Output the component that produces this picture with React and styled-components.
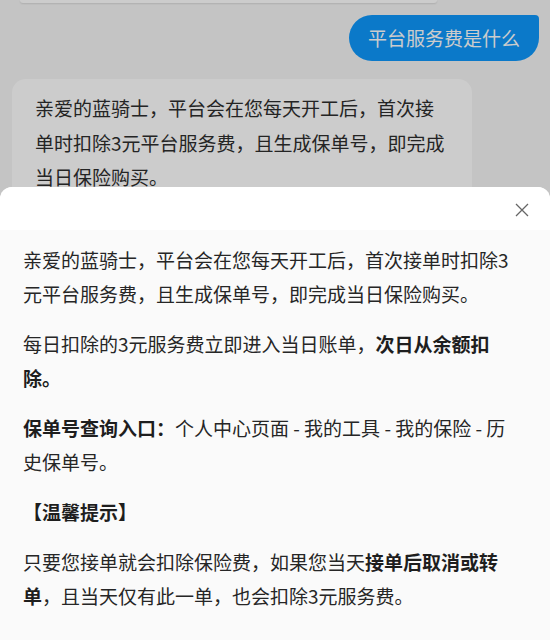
import React from 'react'
import styled, { createGlobalStyle } from 'styled-components'

const GlobalStyle = createGlobalStyle`
  body {
    margin: 0;
    font-family: "Noto Sans CJK SC", "Noto Sans", sans-serif;
  }
`

const Screen = styled.div`
  position: relative;
  width: 550px;
  height: 640px;
  overflow: hidden;
  background: #f6f6f6;
`

const ChatList = styled.div`
  display: flex;
  flex-direction: column;
  padding: 0 11px 0 12px;
`

const CutBubble = styled.div`
  height: 3px;
  width: 417px;
  margin: 0 0 12px 8px;
  background: #fff;
  border-radius: 0 0 12px 12px;
  box-shadow: 0 1px 2px rgba(0, 0, 0, 0.12);
`

const MineBubble = styled.div`
  align-self: flex-end;
  background: #0e98fc;
  color: #fff;
  font-size: 19px;
  line-height: 46px;
  height: 46px;
  padding: 0 19px;
  border-radius: 23px 4px 23px 23px;
`

const BotBubble = styled.div`
  align-self: flex-start;
  width: 414px;
  margin-top: 18px;
  padding: 12px 23px 20px 23px;
  background: #fff;
  color: #2e2e2e;
  font-size: 19px;
  line-height: 34.5px;
  border-radius: 14px;
`

const Mask = styled.div`
  position: absolute;
  inset: 0;
  background: rgba(0, 0, 0, 0.2);
`

const Sheet = styled.div`
  position: absolute;
  left: 0;
  right: 0;
  top: 187px;
  bottom: 0;
  display: flex;
  flex-direction: column;
  background: #fafafa;
  border-radius: 12px 12px 0 0;
  overflow: hidden;
`

const SheetHeader = styled.div`
  height: 43px;
  flex: none;
  display: flex;
  align-items: center;
  justify-content: flex-end;
  padding-right: 21px;
  background: #fff;
`

const CloseButton = styled.button`
  border: 0;
  padding: 0;
  margin-top: 2px;
  background: none;
  width: 14px;
  height: 14px;
  display: flex;
`

const SheetBody = styled.div`
  padding: 13px 37px 0 23px;
  color: #262626;
  font-size: 19px;
  line-height: 34px;
`

const Para = styled.p`
  margin: 0 0 16px;
`

const Strong = styled.b`
  font-weight: 700;
  color: #1e1e1e;
`

export default function App() {
  return (
    <Screen>
      <GlobalStyle />
      <ChatList>
        <CutBubble />
        <MineBubble>平台服务费是什么</MineBubble>
        <BotBubble>
          亲爱的蓝骑士，平台会在您每天开工后，首次接单时扣除3元平台服务费，且生成保单号，即完成当日保险购买。
        </BotBubble>
      </ChatList>
      <Mask />
      <Sheet>
        <SheetHeader>
          <CloseButton aria-label="关闭">
            <svg width="14" height="14" viewBox="0 0 14 14">
              <path d="M1 1L13 13M13 1L1 13" stroke="#666" strokeWidth="1.3" fill="none" />
            </svg>
          </CloseButton>
        </SheetHeader>
        <SheetBody>
          <Para>亲爱的蓝骑士，平台会在您每天开工后，首次接单时扣除3元平台服务费，且生成保单号，即完成当日保险购买。</Para>
          <Para>每日扣除的3元服务费立即进入当日账单，<Strong>次日从余额扣除。</Strong></Para>
          <Para><Strong>保单号查询入口：</Strong>个人中心页面 - 我的工具 - 我的保险 - 历史保单号。</Para>
          <Para><Strong>【温馨提示】</Strong></Para>
          <Para>只要您接单就会扣除保险费，如果您当天<Strong>接单后取消或转单</Strong>，且当天仅有此一单，也会扣除3元服务费。</Para>
        </SheetBody>
      </Sheet>
    </Screen>
  )
}
